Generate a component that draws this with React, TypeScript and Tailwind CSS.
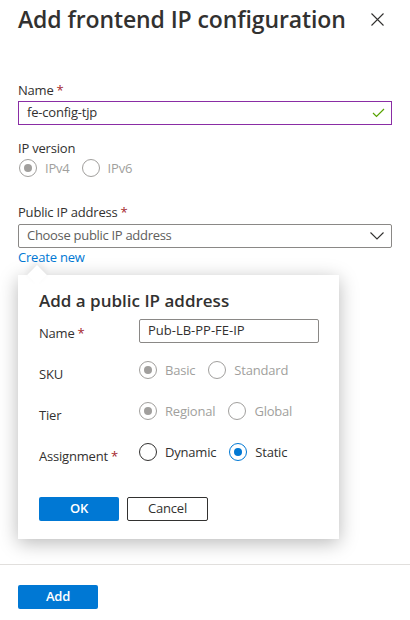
import React from "react";

const font = { fontFamily: '"Segoe UI", "Open Sans", "Noto Sans", sans-serif' };

function Radio({ checked, disabled, label, blue }: { checked?: boolean; disabled?: boolean; label: string; blue?: boolean }) {
  const ring = disabled ? "border-[#a19f9d]" : checked && blue ? "border-[#0078d4]" : "border-[#323130]";
  const dot = disabled ? "bg-[#a19f9d]" : "bg-[#0078d4]";
  return (
    <div className="flex items-center gap-[8px]">
      <div className={`w-[18px] h-[18px] rounded-full border ${ring} flex items-center justify-center bg-white`}>
        {checked && <div className={`w-[8px] h-[8px] rounded-full ${dot}`} />}
      </div>
      <span className={`text-[13px] leading-[18px] tracking-[-0.2px] ${disabled ? "text-[#a19f9d]" : "text-[#323130]"}`}>{label}</span>
    </div>
  );
}

function Star() {
  return <span className="text-[#a4262c] ml-[3px]">*</span>;
}

export default function App() {
  return (
    <div className="w-[410px] h-[620px] bg-white text-[#323130] relative overflow-hidden tracking-[-0.2px]" style={font}>
      <div className="px-[18px]">
        <div className="flex items-start justify-between pt-[3px]">
          <h1 className="text-[23px] leading-[32px] font-semibold tracking-[-0.1px] text-[#323130]">Add frontend IP configuration</h1>
          <svg className="mt-[10px] mr-[8px]" width="13" height="13" viewBox="0 0 13 13">
            <path d="M0.5 0.5 L12.5 12.5 M12.5 0.5 L0.5 12.5" stroke="#323130" strokeWidth="1.1" />
          </svg>
        </div>

        <div className="mt-[46px] text-[13px] leading-[18px]">Name<Star /></div>
        <div className="mt-[2px] h-[24px] border border-[#8a2da5] flex items-center justify-between pl-[8px] pr-[6px]">
          <span className="text-[13px]">fe-config-tjp</span>
          <svg width="13" height="10" viewBox="0 0 13 10">
            <path d="M1 5 L4.5 8.5 L12 1" stroke="#57a300" strokeWidth="1.2" fill="none" />
          </svg>
        </div>

        <div className="mt-[14px] text-[13px] leading-[18px]">IP version</div>
        <div className="mt-[2px] flex items-center gap-[12px] pl-[1px]">
          <Radio checked disabled label="IPv4" />
          <Radio disabled label="IPv6" />
        </div>

        <div className="mt-[26px] text-[13px] leading-[18px]">Public IP address<Star /></div>
        <div className="mt-[3px] h-[24px] border border-[#8a8886] rounded-[2px] flex items-center justify-between pl-[8px] pr-[7px]">
          <span className="text-[13px] tracking-[-0.3px] text-[#605e5c]">Choose public IP address</span>
          <svg width="14" height="8" viewBox="0 0 14 8">
            <path d="M0.5 0.5 L7 7 L13.5 0.5" stroke="#323130" strokeWidth="1.1" fill="none" />
          </svg>
        </div>
        <div className="mt-[1px] text-[13px] leading-[16px] text-[#0078d4]">Create new</div>

        <div className="relative mt-[10px] w-[321px] h-[264px] bg-white shadow-[0_4px_18px_rgba(0,0,0,0.28)] pl-[21px] pt-[14px]">
          <div className="absolute left-[12px] top-[-7px] w-[14px] h-[14px] bg-white rotate-45 shadow-[-3px_-3px_6px_rgba(0,0,0,0.08)]" />
          <div className="relative">
            <div className="text-[17px] leading-[24px] font-semibold tracking-normal">Add a public IP address</div>
            <div className="mt-[6px] flex items-center">
              <div className="w-[100px] text-[13px] leading-[18px] pt-[4px]">Name<Star /></div>
              <div className="w-[180px] h-[24px] border border-[#8a8886] rounded-[2px] flex items-center pl-[8px] text-[13px] tracking-normal">Pub-LB-PP-FE-IP</div>
            </div>
            <div className="mt-[18px] flex items-start h-[24px]">
              <div className="w-[100px] text-[13px] leading-[18px] pt-[4px]">SKU</div>
              <div className="flex items-center gap-[13px]">
                <Radio checked disabled label="Basic" />
                <Radio disabled label="Standard" />
              </div>
            </div>
            <div className="mt-[17px] flex items-start h-[24px]">
              <div className="w-[100px] text-[13px] leading-[18px] pt-[4px]">Tier</div>
              <div className="flex items-center gap-[13px]">
                <Radio checked disabled label="Regional" />
                <Radio disabled label="Global" />
              </div>
            </div>
            <div className="mt-[17px] flex items-start h-[24px]">
              <div className="w-[100px] text-[13px] leading-[18px] pt-[4px]">Assignment<Star /></div>
              <div className="flex items-center gap-[13px]">
                <Radio label="Dynamic" />
                <Radio checked blue label="Static" />
              </div>
            </div>
            <div className="mt-[30px] flex gap-[8px]">
              <div className="w-[80px] h-[24px] bg-[#0078d4] rounded-[2px] text-white text-[13px] font-semibold flex items-center justify-center">OK</div>
              <div className="w-[81px] h-[24px] border border-[#323130] rounded-[2px] text-[13px] flex items-center justify-center">Cancel</div>
            </div>
          </div>
        </div>
      </div>

      <div className="mt-[25px] border-t border-[#e1dfdd]" />
      <div className="px-[18px] pt-[20px]">
        <div className="w-[80px] h-[24px] bg-[#0078d4] rounded-[2px] text-white text-[13px] font-semibold flex items-center justify-center">Add</div>
      </div>
    </div>
  );
}
